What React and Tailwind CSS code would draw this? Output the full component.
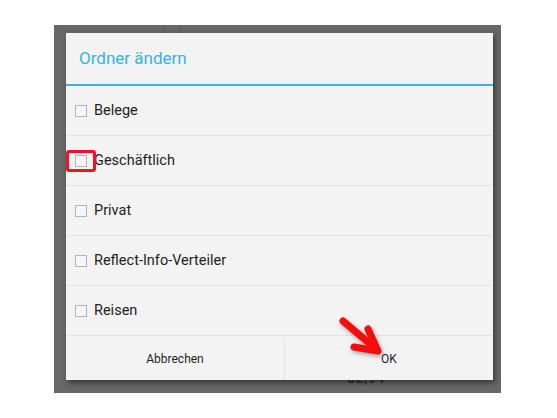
const folders = ["Belege", "Geschäftlich", "Privat", "Reflect-Info-Verteiler", "Reisen"];

function FolderRow({ name, marked }) {
  return (
    <div className="relative flex h-[50px] items-center border-b border-[#e2e2e2] pl-[9px]">
      <span className="h-[12px] w-[12px] border border-[#b4b4b4] bg-[#f6f6f6]" />
      <span className="ml-[7px] pt-px text-[14.5px] text-[#1e1e1e]">{name}</span>
      {marked && (
        <span className="absolute left-0 top-[14px] h-[22px] w-[30px] rounded-[3px] border-[3px] border-[#f2102a]" />
      )}
    </div>
  );
}

export default function App() {
  return (
    <div
      className="relative h-[418px] w-[557px] overflow-hidden bg-white pl-[54px] pt-[25px]"
      style={{ fontFamily: "Roboto, 'Liberation Sans', sans-serif" }}
    >
      <div className="relative h-[368px] w-[447px] bg-[#676767] pl-[12px] pt-[8px]">
        <span className="absolute left-[109px] top-0 h-[8px] w-px bg-[#5a5a5a]" />
        <span className="absolute left-[125px] top-0 h-[8px] w-px bg-[#5a5a5a]" />
        <span className="absolute left-[293px] top-[342px] text-[15px] font-medium text-[#2e2e2e]">32,94</span>

        <div className="relative z-10 flex h-[347px] w-[427px] flex-col bg-[#f3f3f3] shadow-[2px_3px_5px_rgba(0,0,0,0.45)]">
          <div className="flex h-[51px] items-center pl-[13px] pt-px text-[17px] text-[#33b5e5]">
            Ordner ändern
          </div>
          <div className="h-[2px] bg-[#33b5e5]" />

          {folders.map((name) => (
            <FolderRow key={name} name={name} marked={name === "Geschäftlich"} />
          ))}

          <div className="flex flex-1 pt-[2px] text-[12px] text-[#1e1e1e]">
            <div className="flex w-[219px] items-center justify-center border-r border-[#e2e2e2]">
              Abbrechen
            </div>
            <div className="flex flex-1 items-center justify-center">OK</div>
          </div>
        </div>
      </div>

      <svg
        className="absolute left-0 top-0 z-20"
        width="557"
        height="418"
        viewBox="0 0 557 418"
        style={{ filter: "drop-shadow(1px 2px 2px rgba(0,0,0,0.35))" }}
      >
        <g stroke="#f40d0d" strokeWidth="7" strokeLinecap="round" strokeLinejoin="round" fill="none">
          <line x1="343" y1="321" x2="375" y2="348" />
          <polyline points="368,329 378,351 354,347" />
        </g>
      </svg>
    </div>
  );
}
